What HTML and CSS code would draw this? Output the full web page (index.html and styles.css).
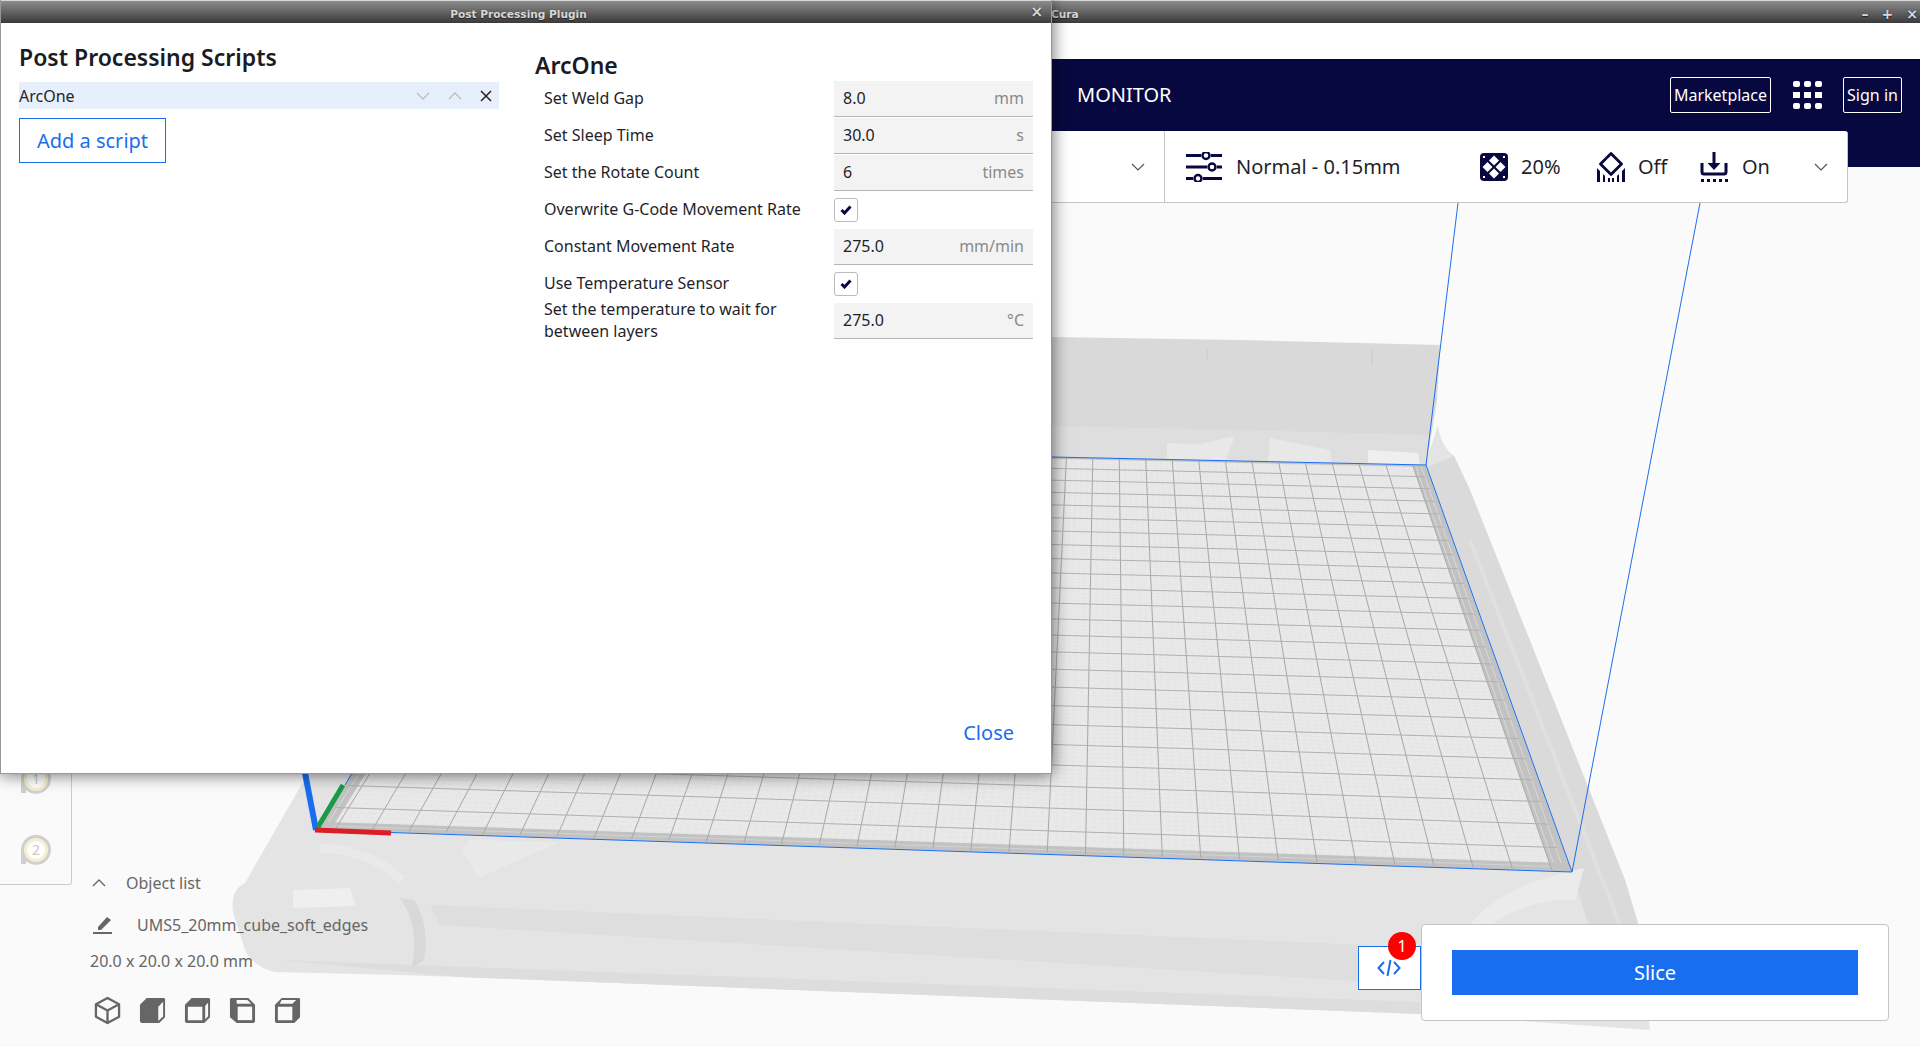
FILE: index.html
```html
<!DOCTYPE html>
<html lang="en">
<head>
  <meta charset="UTF-8">
  <title>Cura - Post Processing Plugin</title>
  <link rel="stylesheet" href="styles.css">
</head>
<body>

  <div class="main-window">
    <div class="titlebar">
      <span class="titlebar-name">Cura</span>
      <div class="win-controls"><span>&#8211;</span><span>+</span><span>&#215;</span></div>
    </div>
    <div class="menu-strip"></div>
    <header class="topbar">
      <span class="topbar-tab">MONITOR</span>
      <div class="topbar-right">
        <button class="topbar-btn btn-market">Marketplace</button>
        <svg class="apps-icon" viewBox="0 0 29 28"><g fill="#fff">
          <rect x="0" y="0" width="7" height="6" rx="2"/><rect x="11" y="0" width="7" height="6" rx="2"/><rect x="22" y="0" width="7" height="6" rx="2"/>
          <rect x="0" y="11" width="7" height="6"/><rect x="11" y="11" width="7" height="6"/><rect x="22" y="11" width="7" height="6"/>
          <rect x="0" y="22" width="7" height="6" rx="2"/><rect x="11" y="22" width="7" height="6" rx="2"/><rect x="22" y="22" width="7" height="6" rx="2"/>
        </g></svg>
        <button class="topbar-btn btn-signin">Sign in</button>
      </div>
    </header>

    <div class="viewport">
      <svg id="scene" class="scene" viewBox="0 0 1920 1047" width="1920" height="1047">
        <!-- printer body -->
        <path d="M1052 455L1426 462L1438 425Q1440 445 1454 456L1470 490L1625 880L1640 930L1650 1030L1420 1014L460 977L400 975L275 972Q255 968 245 950L233 912Q230 890 245 883L307 775z" fill="#e4e4e4"/>
        <!-- back wall -->
        <polygon points="1052,337 1240,340 1440,345 1437,400 1426,468 1052,462" fill="#d9d9d9"/>
        <polygon points="1052,426 1240,430 1430,435 1426,468 1052,462" fill="#dedede"/>
        <polygon points="1167,443 1200,444 1235,436 1225,462 1167,459" fill="#e8e8e8"/>
        <polygon points="1270,438 1330,450 1332,464 1268,462" fill="#e8e8e8"/>
        <polygon points="1368,450 1418,453 1420,466 1368,464" fill="#efefef"/>
        <path d="M1207 349v12M1372 349v16" stroke="#cacaca"/>
        <!-- right rim -->
        <polygon points="1426,468 1454,456 1470,490 1625,880 1640,930 1590,930 1572,872" fill="#dadada"/>
        <path d="M1470 540L1620 925" stroke="#e0e0e0" stroke-width="4"/>
        <!-- front bands and feet -->
        <polygon points="430,905 1365,945 1400,950 1420,985 440,925" fill="#dedede"/>
        <polygon points="280,960 1420,1002 1420,1014 460,977" fill="#dddddd"/>
        <polygon points="293,890 350,888 356,906 293,908" fill="#efefef"/>
        <path d="M400 898Q420 925 412 968L424 960Q430 925 414 900z" fill="#d8d8d8"/>
        <path d="M320 848Q370 850 402 880" fill="none" stroke="#e9e9e9" stroke-width="9"/>
        <path d="M462 850L478 878L560 842L470 840z" fill="#e9e9e9"/>
        <path d="M1584 868L1575 900Q1530 898 1490 925L1470 925Q1500 885 1584 868z" fill="#ebebeb"/>
        <g id="plate"></g>
        <g fill="none" stroke="#196ef0">
          <line x1="1052" y1="457" x2="1426" y2="465"/>
          <line x1="1426" y1="465" x2="1458" y2="203"/>
          <line x1="1426" y1="465" x2="1572" y2="872"/>
          <line x1="1572" y1="872" x2="1700" y2="203"/>
          <line x1="316" y1="830" x2="1572" y2="872"/>
          <line x1="345" y1="785" x2="352" y2="773"/>
        </g>
        <line x1="305" y1="773" x2="316" y2="830" stroke="#196ef0" stroke-width="6"/>
        <line x1="318" y1="827" x2="343" y2="785" stroke="#1a9b47" stroke-width="5"/>
        <line x1="315" y1="830" x2="391" y2="833" stroke="#dc1c27" stroke-width="5"/>
      </svg>

      <div class="tool-panel">
        <svg class="extruder" viewBox="0 0 32 32"><path d="M1 16a15 15 0 1 1 5 11v3H1z" fill="#cfcfcf"/><circle cx="16" cy="16" r="12" fill="#f6efcf"/><circle cx="16" cy="16" r="9" fill="#fff"/><text x="16" y="21" class="extruder-num">1</text></svg>
        <svg class="extruder" viewBox="0 0 32 32"><path d="M1 16a15 15 0 1 1 5 11v3H1z" fill="#cfcfcf"/><circle cx="16" cy="16" r="12" fill="#f6efcf"/><circle cx="16" cy="16" r="9" fill="#fff"/><text x="16" y="21" class="extruder-num">2</text></svg>
      </div>

      <div class="object-info">
        <div class="object-head">
          <svg class="object-chevron" viewBox="0 0 14 8"><path d="M1 7l6-6 6 6" fill="none" stroke="#666" stroke-width="1.3"/></svg>
          <span>Object list</span>
        </div>
        <div class="object-name">
          <svg class="pencil" viewBox="0 0 20 18"><path d="M5 11L14 1l4 3-10 10H5z M0 16h19v2H0z" fill="#666"/></svg>
          <span>UMS5_20mm_cube_soft_edges</span>
        </div>
        <div class="object-size">20.0 x 20.0 x 20.0 mm</div>
        <div class="view-icons">
          <svg viewBox="0 0 28 30"><g fill="none" stroke="#666" stroke-width="2.4" stroke-linejoin="round"><path d="M14 2l12 6.500v13L14 28 2 21.500v-13z"/><path d="M2 8.500L14 15l12-6.500M14 15v13"/></g></svg>
          <svg viewBox="0 0 28 30"><path d="M8 2h18a2 2 0 0 1 1 1v19l-6 6H3a2 2 0 0 1-2-2V9z" fill="#666"/><path d="M20 11l5-5v15l-5 5z" fill="#fafafa"/></svg>
          <svg viewBox="0 0 28 30"><path d="M8 2h18a2 2 0 0 1 1 1v19l-6 6H3a2 2 0 0 1-2-2V9z" fill="#666"/><path d="M4 11h15v14H4zM22 10l3-3v14l-3 3z" fill="#fafafa"/></svg>
          <svg viewBox="0 0 28 30"><path d="M2 2h18l7 7v17a2 2 0 0 1-2 2H8l-7-6V3z" fill="#666"/><path d="M9 11h15v14H9z" fill="#fafafa"/><path d="M8 4h11l4 4H8z" fill="#fafafa"/></svg>
          <svg viewBox="0 0 28 30"><path d="M8 2h18a2 2 0 0 1 1 1v19l-6 6H3a2 2 0 0 1-2-2V9z" fill="#666"/><path d="M4 11h15v14H4zM8 4h15l-4 4H6z" fill="#fafafa"/></svg>
        </div>
      </div>

      <div class="action-area">
        <button class="code-btn">
          <svg viewBox="0 0 24 18"><path d="M7 3L1.500 9 7 15M17 3l5.500 6L17 15M13.500 1l-3 16" fill="none" stroke="#196ef0" stroke-width="2"/></svg>
          <span class="badge">1</span>
        </button>
        <div class="slice-card"><button class="slice-btn">Slice</button></div>
      </div>

      <div class="settings-card">
        <div class="printer-slot">
          <svg class="chev" viewBox="0 0 14 8"><path d="M1 1l6 6 6-6" fill="none" stroke="#555" stroke-width="1.2"/></svg>
        </div>
        <div class="print-settings">
          <svg class="setting-icon sliders" viewBox="0 0 36 30"><g fill="none" stroke="#08073f" stroke-width="3">
            <path d="M0 3.500h15M25 3.500h11M0 15h21M31 15h5M0 26.500h7M17 26.500h19"/>
            <circle cx="20" cy="3.500" r="3.500" stroke-width="2.500"/><circle cx="26" cy="15" r="3.500" stroke-width="2.500"/><circle cx="12" cy="26.500" r="3.500" stroke-width="2.500"/>
          </g></svg>
          <span class="profile-name">Normal - 0.15mm</span>
          <svg class="setting-icon infill" viewBox="0 0 28 28"><rect width="28" height="28" rx="4" fill="#08073f"/><g fill="#fff"><path d="M14 2.500l5 5-5 5-5-5zM14 15.500l5 5-5 5-5-5zM7.500 9l5 5-5 5-5-5zM20.500 9l5 5-5 5-5-5z"/><rect x="3" y="3" width="2" height="2"/><rect x="23" y="3" width="2" height="2"/><rect x="3" y="23" width="2" height="2"/><rect x="23" y="23" width="2" height="2"/></g></svg>
          <span class="setting-val val-infill">20%</span>
          <svg class="setting-icon support" viewBox="0 0 28 30"><g fill="none" stroke="#08073f" stroke-width="2.800"><path d="M14 1.500l10.500 10.500L14 22.500 3.500 12z" stroke-linejoin="round"/></g><path d="M0 16l3 3v11H0zM28 16l-3 3v11h3zM6 22l2 2v6H6zM22 22l-2 2v6h2zM11 26h2v4h-2zM15 26h2v4h-2z" fill="#08073f"/></svg>
          <span class="setting-val val-support">Off</span>
          <svg class="setting-icon adhesion" viewBox="0 0 28 30"><path d="M12.500 0h3v11h5L14 18l-6.500-7h5z" fill="#08073f"/><path d="M2 11v9a2 2 0 0 0 2 2h20a2 2 0 0 0 2-2v-9" fill="none" stroke="#08073f" stroke-width="3"/><path d="M1 27h3v3H1zM7 27h3v3H7zM13 27h3v3h-3zM19 27h3v3h-3zM25 27h3v3h-3z" fill="#08073f"/></svg>
          <span class="setting-val val-adhesion">On</span>
          <svg class="chev chev-end" viewBox="0 0 14 8"><path d="M1 1l6 6 6-6" fill="none" stroke="#555" stroke-width="1.2"/></svg>
        </div>
      </div>
    </div>
  </div>

  <div class="dialog">
    <div class="titlebar dialog-title">
      <span class="titlebar-name">Post Processing Plugin</span>
      <span class="dialog-x">&#215;</span>
    </div>
    <div class="dialog-body">
      <div class="scripts-col">
        <h2 class="col-heading">Post Processing Scripts</h2>
        <div class="script-row">
          <span>ArcOne</span>
          <div class="script-actions">
            <svg viewBox="0 0 14 8"><path d="M1 1l6 6 6-6" fill="none" stroke="#bbb" stroke-width="1.300"/></svg>
            <svg viewBox="0 0 14 8"><path d="M1 7l6-6 6 6" fill="none" stroke="#bbb" stroke-width="1.300"/></svg>
            <svg viewBox="0 0 12 12"><path d="M1 1l10 10M11 1L1 11" fill="none" stroke="#222" stroke-width="1.500"/></svg>
          </div>
        </div>
        <button class="add-script">Add a script</button>
      </div>
      <div class="settings-col">
        <h2 class="col-heading">ArcOne</h2>
        <div class="setting-row"><label>Set Weld Gap</label><div class="field"><span>8.0</span><span class="unit">mm</span></div></div>
        <div class="setting-row"><label>Set Sleep Time</label><div class="field"><span>30.0</span><span class="unit">s</span></div></div>
        <div class="setting-row"><label>Set the Rotate Count</label><div class="field"><span>6</span><span class="unit">times</span></div></div>
        <div class="setting-row"><label>Overwrite G-Code Movement Rate</label><div class="checkbox"><svg viewBox="0 0 12 10"><path d="M1.500 5l3 3 6-6.500" fill="none" stroke="#08073f" stroke-width="3"/></svg></div></div>
        <div class="setting-row"><label>Constant Movement Rate</label><div class="field"><span>275.0</span><span class="unit">mm/min</span></div></div>
        <div class="setting-row"><label>Use Temperature Sensor</label><div class="checkbox"><svg viewBox="0 0 12 10"><path d="M1.500 5l3 3 6-6.500" fill="none" stroke="#08073f" stroke-width="3"/></svg></div></div>
        <div class="setting-row"><label>Set the temperature to wait for<br>between layers</label><div class="field"><span>275.0</span><span class="unit">°C</span></div></div>
      </div>
      <button class="close-btn">Close</button>
    </div>
  </div>

  <script src="script.js"></script>
</body>
</html>
```

FILE: styles.css
```css
* {
  box-sizing: border-box;
}

html, body {
  margin: 0;
  width: 1920px;
  height: 1047px;
  overflow: hidden;
}

body {
  position: relative;
  font-family: "Noto Sans", sans-serif;
  font-size: 16px;
  color: #1f1f2b;
  background-color: #fafafa;
}

button {
  font-family: inherit;
  background: none;
  padding: 0;
  cursor: pointer;
}

/* window title bars */
.titlebar {
  height: 23px;
  display: flex;
  align-items: center;
  position: relative;
  padding-top: 3px;
  background: linear-gradient(#8c8c8c, #3a3a3a);
  border-top: 1px solid #d8d8d8;
  color: #d8d8d8;
  font-family: "DejaVu Sans", sans-serif;
  font-size: 10.6px;
  font-weight: bold;
  text-shadow: 0 1px 1px #222;
}

.main-window {
  width: 1920px;
  height: 1047px;
  display: flex;
  flex-direction: column;
}

.main-window > .titlebar {
  padding-left: 1051px;
}

.win-controls {
  margin-left: auto;
  display: flex;
  gap: 13px;
  padding-right: 2px;
  font-size: 14px;
}

.menu-strip {
  height: 36px;
  background-color: #fff;
}

.topbar {
  height: 108px;
  background-color: #080840;
  display: flex;
  align-items: flex-start;
  padding: 18px 18px 0 1077px;
  color: #fff;
  flex-shrink: 0;
}

.topbar-tab {
  font-size: 20px;
  line-height: 36px;
}

.topbar-right {
  margin-left: auto;
  display: flex;
  align-items: center;
  gap: 21px;
}

.topbar-btn {
  height: 36px;
  border: 1px solid #fff;
  border-radius: 2px;
  color: #fff;
  font-size: 16px;
}

.btn-market {
  width: 101px;
  margin-right: 1px;
}

.btn-signin {
  width: 59px;
}

.apps-icon {
  width: 29px;
  height: 28px;
}

/* 3d scene and what floats over it */
.viewport {
  flex: 1;
  position: relative;
}

.scene {
  position: absolute;
  left: 0;
  top: -167px;
}

.settings-card {
  position: absolute;
  top: -36px;
  left: 1000px;
  width: 848px;
  height: 72px;
  display: flex;
  background-color: #fff;
  border: 1px solid #c4c4c4;
  border-top: 0;
  border-radius: 3px;
}

.printer-slot {
  width: 164px;
  border-right: 1px solid #c4c4c4;
  display: flex;
  align-items: center;
  justify-content: flex-end;
  padding-right: 19px;
}

.chev {
  width: 14px;
  height: 8px;
}

.print-settings {
  flex: 1;
  display: flex;
  align-items: center;
  padding-left: 21px;
  font-size: 20px;
}

.setting-icon {
  width: 28px;
  height: 30px;
  flex-shrink: 0;
}

.sliders {
  width: 36px;
}

.profile-name {
  margin-left: 14px;
  width: 244px;
}

.setting-val {
  margin-left: 13px;
}

.val-infill {
  width: 76px;
}

.val-support {
  width: 62px;
}

.val-adhesion {
  margin-left: 14px;
}

.chev-end {
  margin-left: auto;
  margin-right: 19px;
}

.tool-panel {
  position: absolute;
  left: 0;
  top: 530px;
  width: 72px;
  height: 188px;
  padding: 65px 0 0 20px;
  display: flex;
  flex-direction: column;
  gap: 39px;
  border: 1px solid #ccc;
  border-left: 0;
  border-radius: 0 0 3px 0;
  background-color: #fafafa;
}

.extruder {
  width: 32px;
  height: 32px;
}

.extruder-num {
  font-size: 14px;
  fill: #c8c8c8;
  text-anchor: middle;
}

.object-info {
  position: absolute;
  left: 90px;
  top: 704px;
  color: #666;
}

.object-head {
  display: flex;
  align-items: center;
  gap: 20px;
  height: 24px;
  padding-left: 2px;
}

.object-chevron {
  width: 14px;
  height: 8px;
}

.object-name {
  display: flex;
  align-items: center;
  gap: 24px;
  margin-top: 18px;
  height: 24px;
  padding-left: 3px;
}

.pencil {
  width: 20px;
  height: 18px;
}

.object-size {
  margin-top: 12px;
  line-height: 24px;
}

.view-icons {
  display: flex;
  gap: 18px;
  margin-top: 23px;
  padding-left: 4px;
}

.view-icons svg {
  width: 27px;
  height: 29px;
}

.action-area {
  position: absolute;
  left: 1358px;
  top: 757px;
  display: flex;
  align-items: flex-start;
}

.code-btn {
  position: relative;
  width: 63px;
  height: 44px;
  margin-top: 22px;
  padding-right: 2px;
  background-color: #fff;
  border: 1px solid #196ef0;
  display: flex;
  align-items: center;
  justify-content: center;
}

.code-btn svg {
  width: 24px;
  height: 18px;
}

.badge {
  position: absolute;
  right: 4px;
  top: -15px;
  width: 28px;
  height: 28px;
  border-radius: 50%;
  background-color: #f00;
  color: #fff;
  font-size: 16px;
  line-height: 28px;
  text-align: center;
}

.slice-card {
  width: 468px;
  height: 97px;
  padding: 25px 30px 0;
  background-color: #fff;
  border: 1px solid #c4c4c4;
  border-radius: 4px;
}

.slice-btn {
  width: 100%;
  height: 45px;
  border: 0;
  background-color: #196ef0;
  color: #fff;
  font-size: 20px;
}

/* plugin dialog */
.dialog {
  position: absolute;
  left: 0;
  top: 0;
  width: 1052px;
  height: 774px;
  background-color: #fff;
  box-shadow: 0 0 16px rgba(0, 0, 0, 0.6);
  border-left: 1px solid #999;
  border-right: 1px solid #999;
  border-bottom: 1px solid #999;
  display: flex;
  flex-direction: column;
}

.dialog-title {
  justify-content: center;
  padding-right: 15px;
}

.dialog-x {
  position: absolute;
  right: 8px;
  top: 2px;
  font-size: 15px;
}

.dialog-body {
  flex: 1;
  position: relative;
  display: flex;
}

.col-heading {
  margin: 0;
  font-size: 23px;
  font-weight: 600;
  line-height: 32px;
  color: #1b1b25;
}

.scripts-col {
  width: 535px;
  padding: 18px 0 0 18px;
}

.script-row {
  width: 480px;
  height: 27px;
  margin-top: 9px;
  display: flex;
  align-items: center;
  background-color: #e8effc;
}

.script-actions {
  margin-left: auto;
  display: flex;
  align-items: center;
  gap: 18px;
  padding-right: 7px;
}

.script-actions svg {
  width: 14px;
  height: 8px;
}

.script-actions svg:last-child {
  width: 12px;
  height: 12px;
}

.add-script {
  display: block;
  width: 147px;
  height: 45px;
  margin-top: 9px;
  border: 1px solid #196ef0;
  color: #196ef0;
  font-size: 20px;
}

.settings-col {
  width: 497px;
  padding-top: 26px;
}

.setting-row {
  display: flex;
  align-items: center;
  justify-content: space-between;
  height: 37px;
  padding-left: 8px;
  line-height: 22px;
}

.setting-row label {
  margin-bottom: 2px;
}

.settings-col .col-heading {
  margin: 0 0 -1px -1px;
}

.field {
  width: 199px;
  height: 36px;
  display: flex;
  align-items: center;
  justify-content: space-between;
  padding: 0 9px;
  background-color: #f3f3f3;
  border-bottom: 1px solid #b5b5b5;
}

.unit {
  color: #8a8a8a;
}

.checkbox {
  width: 24px;
  height: 24px;
  margin-right: 175px;
  background-color: #fff;
  border: 1px solid #bbb;
  border-radius: 3px;
  display: flex;
  align-items: center;
  justify-content: center;
}

.checkbox svg {
  width: 12px;
  height: 10px;
}

.close-btn {
  position: absolute;
  right: 37px;
  bottom: 27px;
  border: 0;
  color: #196ef0;
  font-size: 20px;
}
```

FILE: script.js
```js
// build plate grid, perspective mapped from the four plate corners
var c = [[560, 446], [1426, 465], [1572, 872], [316, 830]];

function solve() {
  var dx1 = c[1][0] - c[2][0], dx2 = c[3][0] - c[2][0], sx = c[0][0] - c[1][0] + c[2][0] - c[3][0];
  var dy1 = c[1][1] - c[2][1], dy2 = c[3][1] - c[2][1], sy = c[0][1] - c[1][1] + c[2][1] - c[3][1];
  var d = dx1 * dy2 - dx2 * dy1;
  var g = (sx * dy2 - dx2 * sy) / d;
  var h = (dx1 * sy - sx * dy1) / d;
  return {
    a: c[1][0] - c[0][0] + g * c[1][0], b: c[3][0] - c[0][0] + h * c[3][0], c: c[0][0],
    d: c[1][1] - c[0][1] + g * c[1][1], e: c[3][1] - c[0][1] + h * c[3][1], f: c[0][1],
    g: g, h: h
  };
}

var m = solve();

function pt(u, v) {
  var w = m.g * u + m.h * v + 1;
  return [(m.a * u + m.b * v + m.c) / w, (m.d * u + m.e * v + m.f) / w];
}

function line(p, q, color, width) {
  return '<line x1="' + p[0].toFixed(1) + '" y1="' + p[1].toFixed(1) + '" x2="' + q[0].toFixed(1) + '" y2="' + q[1].toFixed(1) +
    '" stroke="' + color + '" stroke-width="' + width + '"/>';
}

var html = '<polygon points="' + c.join(' ') + '" fill="#c2c2c2"/>';
var inner = [pt(0.012, 0.008), pt(0.985, 0.008), pt(0.985, 0.985), pt(0.012, 0.985)];
html += '<polygon points="' + inner.join(' ') + '" fill="#e8e8e8"/>';

var i;
// fine 2mm lines give the dotted look of the plate
for (i = 0; i <= 165; i++) {
  html += line(pt(i / 165, 0.008), pt(i / 165, 0.985), '#f0f0f0', 0.5);
}
for (i = 0; i <= 120; i++) {
  html += line(pt(0.012, i / 120), pt(0.985, i / 120), '#e2e2e2', 0.5);
}
// 10mm grid is centred on the plate, so the 330mm side starts on half a cell
for (i = 0; i < 33; i++) {
  html += line(pt((i + 0.5) / 33, 0.003), pt((i + 0.5) / 33, 0.997), '#a8a8a8', 1);
}
for (i = 1; i < 24; i++) {
  html += line(pt(0.004, i / 24), pt(0.995, i / 24), '#b0b0b0', 1);
}
document.getElementById('plate').innerHTML = html;
```
